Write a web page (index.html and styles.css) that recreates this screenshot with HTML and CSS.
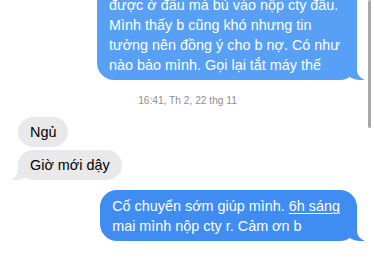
FILE: index.html
```html
<!DOCTYPE html>
<html lang="vi">
<head>
  <meta charset="UTF-8" />
  <title>Tin nhắn</title>
  <link rel="stylesheet" href="styles.css">
</head>
<body>
  <div class="thread">
    <div class="bubble sent light continued">
      được ở đầu mà bù vào nộp cty đâu.<br>
      Mình thấy b cũng khó nhưng tin<br>
      tưởng nên đồng ý cho b nợ. Có như<br>
      nào bảo mình. Gọi lại tắt máy thế
    </div>

    <div class="stamp">16:41, Th 2, 22 thg 11</div>

    <div class="bubble received first">Ngủ</div>
    <div class="bubble received tail">Giờ mới dậy</div>

    <div class="bubble sent new">
      Cố chuyển sớm giúp mình. <span class="link">6h sáng</span><br>
      mai mình nộp cty r. Cảm ơn b
    </div>
  </div>

  <!-- thanh cuộn -->
  <div class="scrollbar"></div>
</body>
</html>
```

FILE: styles.css
```css
* {
  box-sizing: border-box;
}

body {
  margin: 0;
  font-family: "Liberation Sans", Arial, sans-serif;
  background-color: #ffffff;
  overflow: hidden;
}

.thread {
  display: flex;
  flex-direction: column;
  padding: 0 17px 0 18px;
  margin-top: -31px;
}

.bubble {
  position: relative;
  max-width: 272px;
  padding: 5px 12px;
  border-radius: 17px;
  font-size: 14.4px;
  line-height: 20px;
  white-space: nowrap;
}

.sent {
  align-self: flex-end;
  color: #ffffff;
  background-color: #3f8cf2;
  padding-right: 17px;
}

.sent.light {
  background-color: #58a0f6;
}

.sent.continued {
  padding-top: 26px;
  border-radius: 0 0 17px 17px;
}

.sent.new {
  margin-top: 10px;
  padding-top: 6px;
}

.sent::before,
.sent::after,
.received.tail::before,
.received.tail::after {
  content: "";
  position: absolute;
  bottom: 0;
  height: 20px;
  z-index: -1;
}

.sent::before {
  right: -7px;
  width: 20px;
  background-color: inherit;
  border-bottom-left-radius: 16px 14px;
}

.sent::after {
  right: -26px;
  width: 26px;
  background-color: #ffffff;
  border-bottom-left-radius: 10px;
}

.received {
  align-self: flex-start;
  color: #000000;
  background-color: #e9e9eb;
}

.received.first {
  margin-top: 10px;
}

.received.tail {
  margin-top: 3px;
}

.received.tail::before {
  left: -7px;
  width: 20px;
  background-color: #e9e9eb;
  border-bottom-right-radius: 16px 14px;
}

.received.tail::after {
  left: -26px;
  width: 26px;
  background-color: #ffffff;
  border-bottom-right-radius: 10px;
}

.stamp {
  align-self: center;
  margin-top: 14px;
  font-size: 10.2px;
  line-height: 13px;
  color: #8e8e93;
}

.link {
  text-decoration: underline;
  text-decoration-thickness: 1px;
  text-underline-offset: 2px;
}

.scrollbar {
  position: absolute;
  top: 0;
  right: 3px;
  width: 3px;
  height: 128px;
  border-radius: 2px;
  background-color: #a8a8a8;
}
```
